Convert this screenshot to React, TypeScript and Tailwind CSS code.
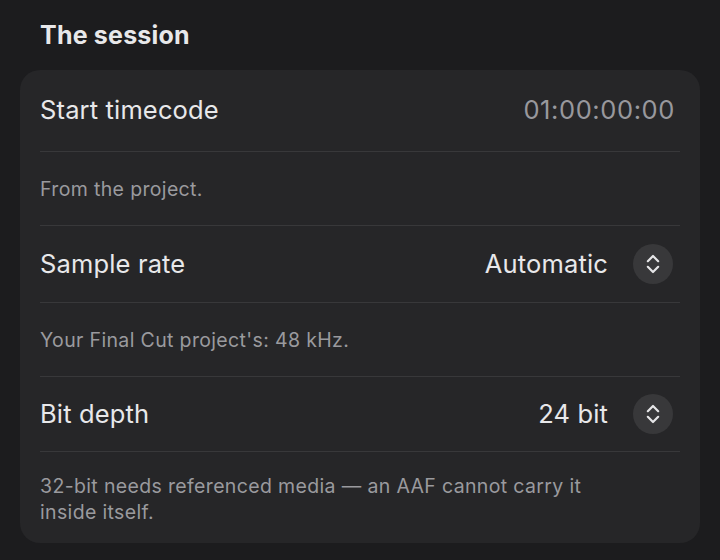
const Stepper = () => (
  <button className="flex h-10 w-10 items-center justify-center rounded-full bg-[#38383a] text-[#e5e5e7]">
    <svg width="14" height="20" viewBox="0 0 14 20" fill="none" stroke="currentColor" strokeWidth="2.2" strokeLinecap="round" strokeLinejoin="round">
      <path d="M1.8 7.2 7 2l5.2 5.2" />
      <path d="M1.8 12.8 7 18l5.2-5.2" />
    </svg>
  </button>
)

const Divider = () => <div className="h-px bg-[#38383a]" />

const Note = ({ children, last }: { children: React.ReactNode; last?: boolean }) => (
  <div className={last ? 'pt-[21px] pb-[18px]' : 'flex h-[73px] items-center'}>
    <p className="max-w-[560px] text-[19.5px] leading-[26px] tracking-[0.35px] text-[#9a9a9e]">{children}</p>
  </div>
)

const App = () => {
  return (
    <div
      className="min-h-[560px] w-[720px] bg-[#1c1c1e] px-5 pt-[19px] pb-4 text-[#e8e8ea]"
      style={{ fontFamily: 'Inter, "Noto Sans", sans-serif' }}
    >
      <h2 className="px-5 text-[25px] font-bold leading-8 tracking-[0.2px]">The session</h2>
      <div className="mt-[19px] rounded-[20px] bg-[#262628] px-5">
        <div className="flex h-[81px] items-center justify-between">
          <span className="text-[25.5px] tracking-[0.15px]">Start timecode</span>
          <span className="pr-[5px] text-[25.5px] tracking-[0.6px] text-[#98989d]">01:00:00:00</span>
        </div>
        <Divider />
        <Note>From the project.</Note>
        <Divider />
        <div className="flex h-[76px] items-center justify-between">
          <span className="text-[25.5px] tracking-[0.15px]">Sample rate</span>
          <div className="flex items-center gap-[25px] pr-[7px]">
            <span className="text-[25.5px] tracking-[0.15px]">Automatic</span>
            <Stepper />
          </div>
        </div>
        <Divider />
        <Note>Your Final Cut project's: 48 kHz.</Note>
        <Divider />
        <div className="flex h-[74px] items-center justify-between">
          <span className="text-[25.5px] tracking-[0.15px]">Bit depth</span>
          <div className="flex items-center gap-[25px] pr-[7px]">
            <span className="text-[25.5px] tracking-[0.15px]">24 bit</span>
            <Stepper />
          </div>
        </div>
        <Divider />
        <Note last>32-bit needs referenced media — an AAF cannot carry it inside itself.</Note>
      </div>
    </div>
  )
}

export default App
